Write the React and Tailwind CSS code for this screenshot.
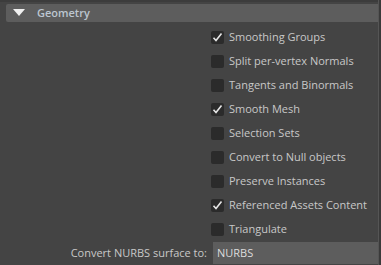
import React from "react";

const options = [
  { label: "Smoothing Groups", checked: true },
  { label: "Split per-vertex Normals", checked: false },
  { label: "Tangents and Binormals", checked: false },
  { label: "Smooth Mesh", checked: true },
  { label: "Selection Sets", checked: false },
  { label: "Convert to Null objects", checked: false },
  { label: "Preserve Instances", checked: false },
  { label: "Referenced Assets Content", checked: true },
  { label: "Triangulate", checked: false },
];

function CheckBox({ checked }) {
  return (
    <span className="flex h-[13px] w-[13px] items-center justify-center rounded-[2px] bg-[#2b2b2b]">
      {checked && (
        <svg width="11" height="11" viewBox="0 0 11 11" fill="none">
          <path d="M1.5 5.8 L4 8.5 L9.5 1.5" stroke="#e6e6e6" strokeWidth="1.6" />
        </svg>
      )}
    </span>
  );
}

export default function App() {
  return (
    <div
      className="flex h-[265px] w-[381px] bg-[#444444] text-[11px] text-[#c8c8c8]"
      style={{ fontFamily: "'Open Sans', 'DejaVu Sans', sans-serif" }}
    >
      <div className="flex flex-1 flex-col">
        <div className="h-[2px] bg-[#3c3c3c]" />
        {/* Section header */}
        <div className="ml-[6px] mt-[2px] flex h-[20px] items-center rounded-l-[2px] bg-[#5d5d5d]">
          <svg width="12" height="7" viewBox="0 0 12 7" className="ml-[7px]">
            <polygon points="0,0 12,0 6,7" fill="#f0f0f0" />
          </svg>
          <span className="ml-[12px] font-semibold text-[#bcc6d0]">Geometry</span>
        </div>

        {/* Options */}
        <div className="mt-[3px] flex flex-col">
          {options.map((o) => (
            <div key={o.label} className="flex h-[24px] items-center pl-[211px]">
              <CheckBox checked={o.checked} />
              <span className="ml-[5px]">{o.label}</span>
            </div>
          ))}
          <div className="flex h-[24px] items-center">
            <span className="w-[208px] pr-[1px] text-right">Convert NURBS surface to:</span>
            <div className="ml-[5px] flex h-[22px] flex-1 items-center bg-[#5d5d5d] pl-[4px] text-[#dcdcdc]">
              NURBS
            </div>
          </div>
        </div>
      </div>
      <div className="w-[3px] border-l border-[#555555] bg-[#3a3a3a]" />
    </div>
  );
}
